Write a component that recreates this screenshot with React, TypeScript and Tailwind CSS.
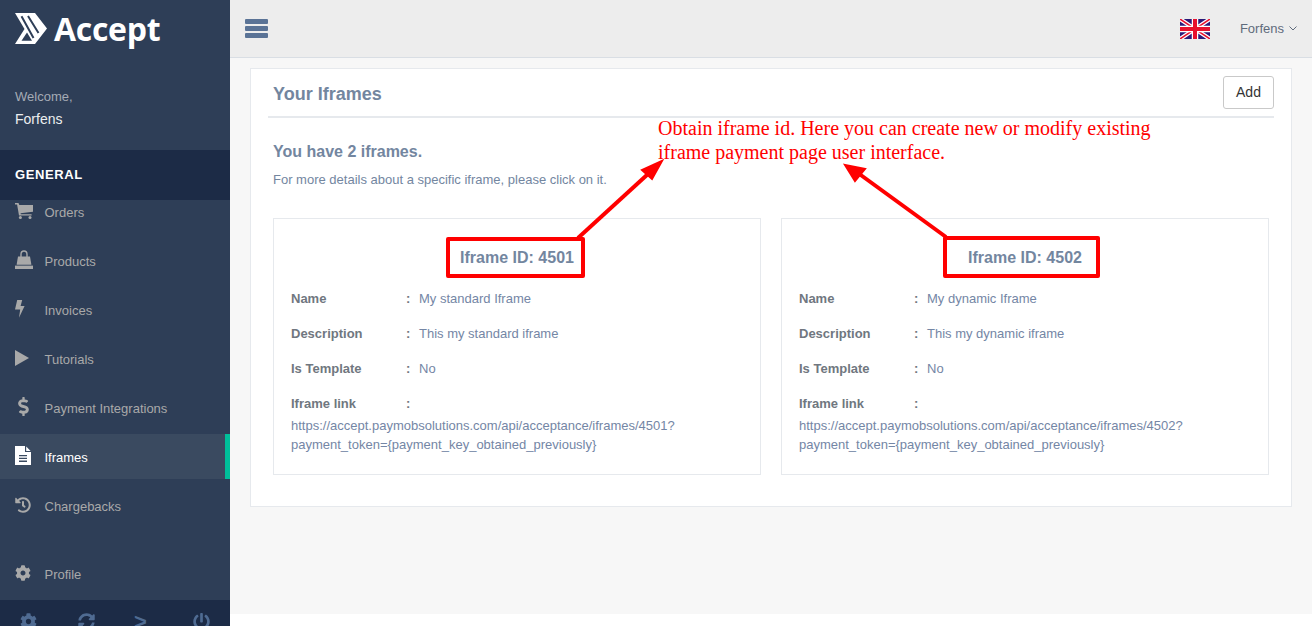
import React from "react";
import { FaDollarSign, FaHistory, FaCog, FaSyncAlt, FaPowerOff } from "react-icons/fa";

function CartIcon() {
  return (
    <svg width="18" height="16" viewBox="0 0 18 16" fill="currentColor">
      <path d="M0 0H3.5L4.3 2H18V8.7L5.5 10.3L5.9 11.2H16.6V12.6H4L2.1 1.4H0Z" />
      <circle cx="5.4" cy="14.4" r="1.5" />
      <circle cx="15" cy="14.4" r="1.5" />
    </svg>
  );
}

function BagIcon() {
  return (
    <svg width="18" height="19" viewBox="0 0 18 19" fill="currentColor">
      <path d="M3 6.5H15L16.4 14.8H1.6Z" />
      <path d="M0 15.6H18V19H0Z" />
      <path d="M6 9V4.5C6 2.3 7.2 1 9 1C10.8 1 12 2.3 12 4.5V9" fill="none" stroke="currentColor" strokeWidth="1.4" />
    </svg>
  );
}

function BoltIcon() {
  return (
    <svg width="10" height="18" viewBox="0 0 10 18" fill="currentColor">
      <path d="M2.2 0H7.2L5.6 6H9.6L4 17.8L5.2 9.6H0Z" />
    </svg>
  );
}

function PlayIcon() {
  return (
    <svg width="14" height="16" viewBox="0 0 14 16" fill="currentColor">
      <path d="M0 0L14 8L0 16Z" />
    </svg>
  );
}

function FileIcon() {
  return (
    <svg width="16" height="19" viewBox="0 0 16 19" fill="currentColor">
      <path d="M0 0H10V6H16V19H0Z" />
      <path d="M11.2 0.4L15.6 4.9H11.2Z" />
      <path d="M4 9H12V10.3H4ZM4 11.8H12V13.1H4ZM4 14.6H12V15.9H4Z" fill="#3a4a60" />
    </svg>
  );
}

const nav = [
  { label: "Orders", icon: <CartIcon /> },
  { label: "Products", icon: <BagIcon /> },
  { label: "Invoices", icon: <BoltIcon /> },
  { label: "Tutorials", icon: <PlayIcon /> },
  { label: "Payment Integrations", icon: <FaDollarSign size={19} className="-ml-[1px]" /> },
  { label: "Iframes", icon: <FileIcon />, active: true },
  { label: "Chargebacks", icon: <FaHistory size={16} /> },
];

function NavItem({ label, icon, active }: { label: string; icon: React.ReactNode; active?: boolean }) {
  return (
    <div className={`flex h-[45px] shrink-0 items-center mb-[4px] pl-[15px] ${active ? "bg-[#3a4a60] border-r-[5px] border-[#00bf9a] text-white" : "text-[#a9a9a9]"}`}>
      <span className="w-[29.5px] flex items-center -mt-[2px]">{icon}</span>
      <span className="text-[13px] mt-[2px]">{label}</span>
    </div>
  );
}

function Row({ k, v }: { k: string; v: string }) {
  return (
    <div className="flex h-[35px] items-center text-[13px]">
      <span className="w-[115px] font-bold text-[#707780]">{k}</span>
      <span className="w-[13px] font-bold text-[#707780]">:</span>
      <span className="text-[#7486a5]">{v}</span>
    </div>
  );
}

function IframeCard({ id, name, desc }: { id: string; name: string; desc: string }) {
  return (
    <div className="w-[488px] h-[257px] border border-[#e6e9ed] px-[17px] bg-white">
      <div className="text-center text-[16px] font-bold text-[#73869f] pt-[29px] h-[62px] leading-[20px]">Iframe ID: {id}</div>
      <Row k="Name" v={name} />
      <Row k="Description" v={desc} />
      <Row k="Is Template" v="No" />
      <Row k="Iframe link" v="" />
      <div className="text-[13px] leading-[19px] text-[#7486a5] -mt-[5px]">
        https://accept.paymobsolutions.com/api/acceptance/iframes/{id}?
        <br />
        payment_token={"{payment_key_obtained_previously}"}
      </div>
    </div>
  );
}

function Flag() {
  return (
    <svg width="30" height="20" viewBox="0 0 60 40">
      <rect width="60" height="40" fill="#2b1a78" />
      <path d="M0 0L60 40M60 0L0 40" stroke="#fff" strokeWidth="8" />
      <path d="M0 0L60 40M60 0L0 40" stroke="#e8112d" strokeWidth="3" />
      <path d="M30 0V40M0 20H60" stroke="#fff" strokeWidth="13" />
      <path d="M30 0V40M0 20H60" stroke="#e8112d" strokeWidth="8" />
    </svg>
  );
}

function Logo() {
  return (
    <svg width="32" height="31" viewBox="0 0 32 31" className="shrink-0">
      <path d="M0 0H20L32 15.5L20 31H0L9.5 16Z" fill="#fff" />
      <path d="M6.5 3.2L18.5 25M13 3L23.5 20" stroke="#2e3e57" strokeWidth="2" fill="none" />
      <path d="M6.5 27.8H17L12 19.5Z" fill="#2e3e57" />
    </svg>
  );
}

export default function App() {
  return (
    <div className="relative flex h-[626px] w-[1312px] overflow-hidden bg-white font-['Liberation_Sans',sans-serif]">
      <aside className="w-[230px] shrink-0 flex flex-col bg-[#2e3e57] overflow-hidden">
        <div className="h-[57px] shrink-0 pl-[15px] pt-[13px] flex items-start gap-[7px] text-white">
          <Logo />
          <span className="font-['Open_Sans',sans-serif] font-bold text-[32px] tracking-[-0.3px] leading-[38px] -mt-[3px]">Accept</span>
        </div>
        <div className="h-[93px] shrink-0 pl-[15px] pt-[31px]">
          <div className="text-[13px] leading-[18px] text-[#a5abb5]">Welcome,</div>
          <div className="text-[14px] leading-[18px] mt-[4px] text-[#eceef0]">Forfens</div>
        </div>
        <div className="relative z-10 h-[50px] shrink-0 bg-[#1c2b46] pl-[15px] flex items-center text-white font-bold text-[13px] tracking-[0.6px]">GENERAL</div>
        <nav className="-mt-[11px] shrink-0">
          {nav.map((n) => (
            <NavItem key={n.label} {...n} />
          ))}
        </nav>
        <div className="mt-[19px] shrink-0">
          <NavItem label="Profile" icon={<FaCog size={16} />} />
        </div>
        <div className="h-[26px] shrink-0 bg-[#1c2b46] flex pl-[20px] pt-[13px] text-[#4f6b92]">
          <FaCog size={17} />
          <FaSyncAlt size={17} className="ml-[41px]" />
          <span className="ml-[39px] font-bold text-[22px] leading-[18px] w-[13px]">&gt;</span>
          <FaPowerOff size={17} className="ml-[46px]" />
        </div>
      </aside>
      <div className="flex-1 flex flex-col">
        <header className="h-[58px] shrink-0 bg-[#ededed] border-b border-[#d9dee4] flex items-center pl-[15px] pr-[15px]">
          <div className="w-[23px] flex flex-col gap-[2px]">
            <div className="h-[5px] rounded-[1px] bg-[#5a7396]" />
            <div className="h-[5px] rounded-[1px] bg-[#5a7396]" />
            <div className="h-[5px] rounded-[1px] bg-[#5a7396]" />
          </div>
          <div className="ml-auto flex items-center">
            <Flag />
            <span className="ml-[30px] text-[13px] text-[#5f6b7c]">Forfens</span>
            <svg width="8" height="5" viewBox="0 0 8 5" className="ml-[5px] text-[#5f6b7c]">
              <path d="M0.5 0.5L4 4L7.5 0.5" fill="none" stroke="currentColor" strokeWidth="1" />
            </svg>
          </div>
        </header>
        <main className="h-[556px] shrink-0 bg-[#f7f7f7] pl-[20px] pr-[20px] pt-[10px]">
          <div className="h-[439px] bg-white border border-[#e6e9ed] pl-[17px] pr-[17px] pt-[6px]">
            <div className="flex h-[34px] items-center justify-between pl-[5px]">
              <h2 className="text-[18px] font-bold text-[#73869f] mt-[4px]">Your Iframes</h2>
              <button className="h-[33px] w-[51px] rounded-[3px] border border-[#c9c9c9] text-[14px] text-[#333] bg-white">Add</button>
            </div>
            <div className="h-[2px] mt-[7px] bg-[#e6e9ed]" />
            <div className="pl-[5px] pt-[24px]">
              <div className="text-[16px] font-bold leading-[20px] text-[#73869f]">You have 2 iframes.</div>
              <div className="text-[13px] leading-[18px] mt-[9px] text-[#73869f]">For more details about a specific iframe, please click on it.</div>
            </div>
            <div className="flex gap-[20px] pl-[5px] mt-[29px]">
              <IframeCard id="4501" name="My standard Iframe" desc="This my standard iframe" />
              <IframeCard id="4502" name="My dynamic Iframe" desc="This my dynamic iframe" />
            </div>
          </div>
        </main>
      </div>

      <div className="absolute left-[658px] top-[116px] w-[520px] font-['Liberation_Serif',serif] text-[20px] leading-[24px] text-[#ff0000]">
        Obtain iframe id. Here you can create new or modify existing
        <br />
        iframe payment page user interface.
      </div>
      <div className="absolute left-[446px] top-[237px] w-[139px] h-[41px] border-[4px] border-[#ff0000] rounded-[2px]" />
      <div className="absolute left-[943px] top-[236px] w-[157px] h-[42px] border-[4px] border-[#ff0000] rounded-[2px]" />
      <svg className="absolute left-0 top-0 pointer-events-none" width="1312" height="626">
        <path d="M578 238L648 174" stroke="#ff0000" strokeWidth="4" />
        <path d="M662 161L642 170L652 179Z" fill="#ff0000" stroke="#ff0000" strokeWidth="2" />
        <path d="M946 237L858 173" stroke="#ff0000" strokeWidth="4" />
        <path d="M845 165L865 169L855 181Z" fill="#ff0000" stroke="#ff0000" strokeWidth="2" />
      </svg>
    </div>
  );
}
